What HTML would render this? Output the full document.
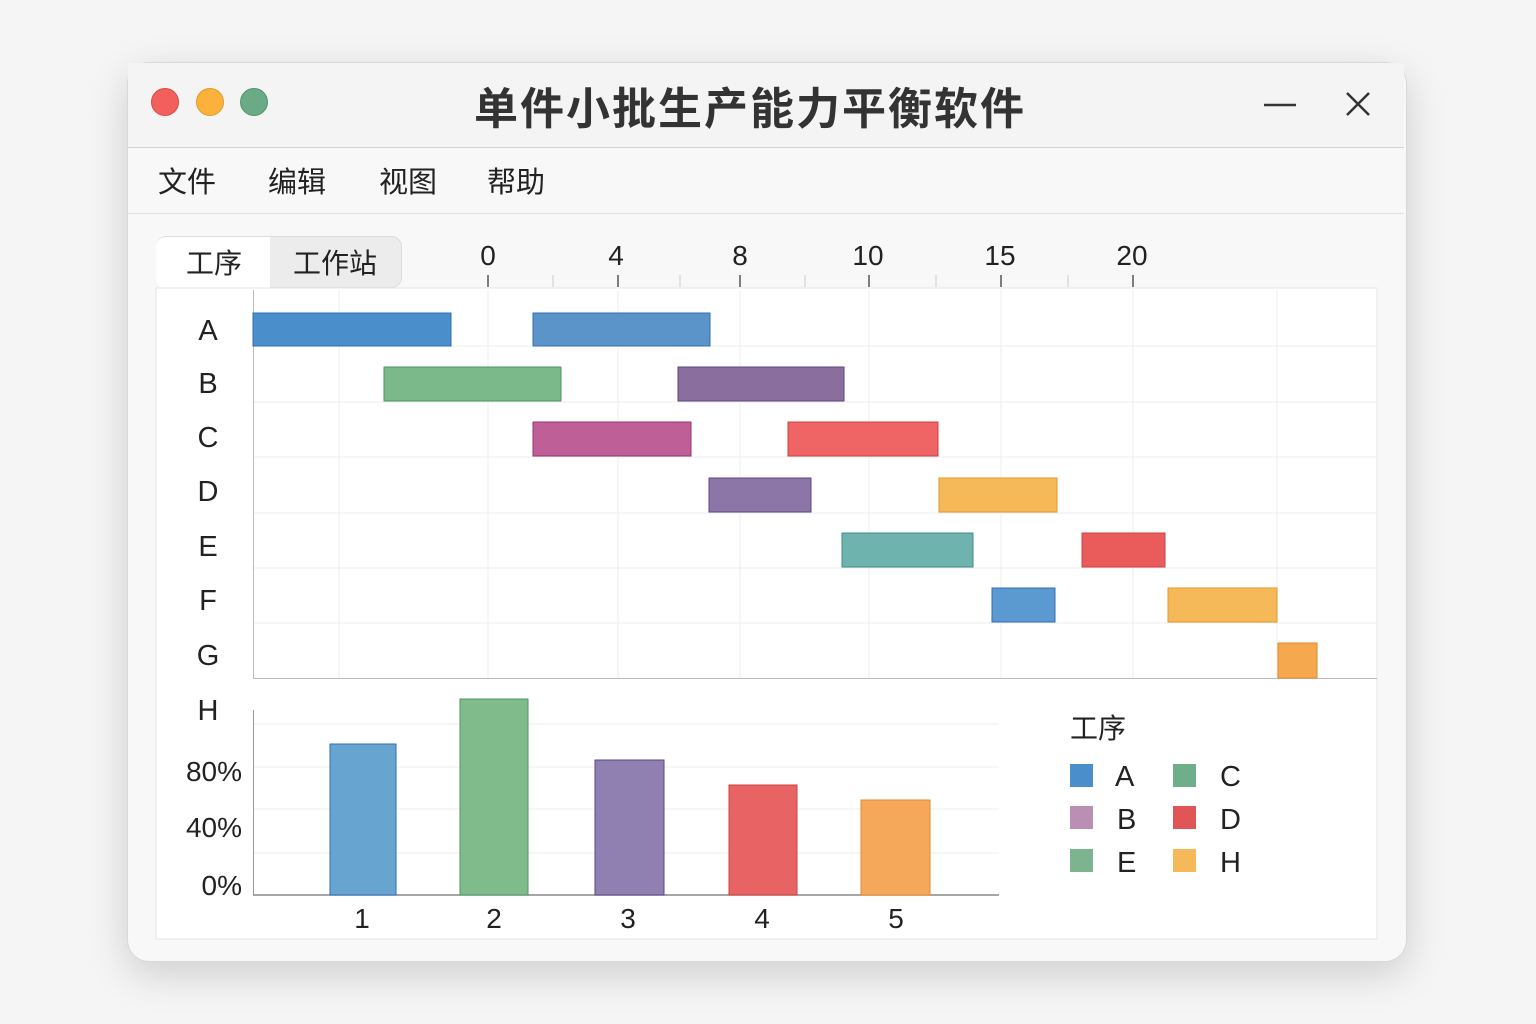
<!DOCTYPE html>
<html><head><meta charset="utf-8"><style>
body{margin:0;width:1536px;height:1024px;background:#f5f5f5;overflow:hidden;font-family:"Liberation Sans","Noto Sans CJK SC",sans-serif;}
.win{position:absolute;left:127px;top:62px;width:1278px;height:898px;border-radius:22px;background:#f8f8f8;box-shadow:0 12px 40px rgba(0,0,0,0.16);border:1px solid #d8d8d8;overflow:hidden;}
svg{position:absolute;left:0;top:0}
</style></head><body>
<div class="win"></div>
<svg width="1536" height="1024" font-family="Liberation Sans, Noto Sans CJK SC, sans-serif">
<rect x="128" y="63" width="1276" height="84" fill="#f4f4f4"/>
<line x1="128" y1="147.5" x2="1404" y2="147.5" stroke="#d6d6d6"/>
<line x1="128" y1="213.5" x2="1404" y2="213.5" stroke="#e2e2e2"/>
<circle cx="165" cy="102" r="13.5" fill="#f25f5c" stroke="#d94a47"/>
<circle cx="210" cy="102" r="13.5" fill="#fbb13c" stroke="#e09a2a"/>
<circle cx="254" cy="102" r="13.5" fill="#6aaa84" stroke="#4f9470"/>
<text x="750" y="124" font-size="44" font-weight="bold" fill="#333" text-anchor="middle" letter-spacing="2">单件小批生产能力平衡软件</text>
<line x1="1264" y1="105" x2="1296" y2="105" stroke="#333" stroke-width="2.5"/>
<path d="M1347 93 L1369 115 M1369 93 L1347 115" stroke="#333" stroke-width="2.5"/>
<g font-size="29" fill="#222"><text x="158" y="192">文件</text><text x="268" y="192">编辑</text><text x="379" y="192">视图</text><text x="487" y="192">帮助</text></g>
<rect x="156.5" y="236.5" width="245" height="51" rx="10" fill="#ececec" stroke="#dcdcdc"/>
<path d="M270 237 H166 a10 10 0 0 0 -10 10 V278 a10 10 0 0 0 10 10 H270Z" fill="#fff"/>
<text x="186" y="273" font-size="28" fill="#222">工序</text><text x="293" y="273" font-size="28" fill="#222">工作站</text>
<rect x="156" y="288" width="1221" height="651" fill="#fff" stroke="#e6e6e6"/>
<g font-size="28" fill="#222" text-anchor="middle"><text x="488" y="265">0</text><text x="616" y="265">4</text><text x="740" y="265">8</text><text x="868" y="265">10</text><text x="1000" y="265">15</text><text x="1132" y="265">20</text></g>
<g stroke="#555" stroke-width="1.5"><path d="M488 275V287M618 275V287M740 275V287M869 275V287M1001 275V287M1133 275V287"/></g>
<g stroke="#ccc"><path d="M553 275V287M680 275V287M805 275V287M936 275V287M1068 275V287"/></g>
<g stroke="#ececec"><path d="M339 290V678M488 290V678M618 290V678M740 290V678M869 290V678M1001 290V678M1133 290V678M1277 290V678"/>
<path d="M253 346H1377M253 402H1377M253 457H1377M253 513H1377M253 568H1377M253 623H1377"/></g>
<line x1="253.5" y1="290" x2="253.5" y2="678" stroke="#bbb"/>
<line x1="253" y1="678.5" x2="1377" y2="678.5" stroke="#bbb"/>
<g font-size="29" fill="#222" text-anchor="middle"><text x="208" y="340">A</text><text x="208" y="393">B</text><text x="208" y="447">C</text><text x="208" y="501">D</text><text x="208" y="556">E</text><text x="208" y="610">F</text><text x="208" y="665">G</text><text x="208" y="720">H</text></g>
<g stroke-width="1">
<rect x="253" y="313" width="198" height="33" fill="#4a8fcc" stroke="#2f6fb0"/>
<rect x="533" y="313" width="177" height="33" fill="#5b94c9" stroke="#2f6fb0"/>
<rect x="384" y="367" width="177" height="34" fill="#7bb88a" stroke="#4f9466"/>
<rect x="678" y="367" width="166" height="34" fill="#8a6f9e" stroke="#5e4580"/>
<rect x="533" y="422" width="158" height="34" fill="#bf5f98" stroke="#98306e"/>
<rect x="788" y="422" width="150" height="34" fill="#ef6464" stroke="#cc4040"/>
<rect x="709" y="478" width="102" height="34" fill="#8c76a8" stroke="#5e4580"/>
<rect x="939" y="478" width="118" height="34" fill="#f6b95a" stroke="#e09a2a"/>
<rect x="842" y="533" width="131" height="34" fill="#6fb3ae" stroke="#3e8e88"/>
<rect x="1082" y="533" width="83" height="34" fill="#ea5c5c" stroke="#cc4040"/>
<rect x="992" y="588" width="63" height="34" fill="#5b9ad0" stroke="#2f6fb0"/>
<rect x="1168" y="588" width="109" height="34" fill="#f6b95a" stroke="#e09a2a"/>
<rect x="1278" y="643" width="39" height="35" fill="#f6a84e" stroke="#e08a2a"/>
</g>
<g stroke="#ececec"><path d="M254 724H999M254 767H999M254 809H999M254 853H999"/></g>
<line x1="253.5" y1="710" x2="253.5" y2="895" stroke="#999"/>
<line x1="253" y1="895" x2="999" y2="895" stroke="#888" stroke-width="1.5"/>
<g font-size="28" fill="#222" text-anchor="end"><text x="242" y="781">80%</text><text x="242" y="837">40%</text><text x="242" y="895">0%</text></g>
<rect x="330" y="744" width="66" height="151" fill="#68a4d0" stroke="#2f6fb0"/>
<rect x="460" y="699" width="68" height="196" fill="#80bb8c" stroke="#4f9466"/>
<rect x="595" y="760" width="69" height="135" fill="#9080b2" stroke="#5e4580"/>
<rect x="729" y="785" width="68" height="110" fill="#e86464" stroke="#cc4040"/>
<rect x="861" y="800" width="69" height="95" fill="#f6a85a" stroke="#e08a2a"/>
<g font-size="28" fill="#222" text-anchor="middle"><text x="362" y="928">1</text><text x="494" y="928">2</text><text x="628" y="928">3</text><text x="762" y="928">4</text><text x="896" y="928">5</text></g>
<text x="1070" y="738" font-size="28" fill="#222">工序</text>
<rect x="1070" y="764" width="23" height="23" fill="#4a8fcc"/><text x="1115" y="786" font-size="29" fill="#222">A</text>
<rect x="1173" y="764" width="23" height="23" fill="#6fae8a"/><text x="1220" y="786" font-size="29" fill="#222">C</text>
<rect x="1070" y="806" width="23" height="23" fill="#bb8fb4"/><text x="1117" y="829" font-size="29" fill="#222">B</text>
<rect x="1173" y="806" width="23" height="23" fill="#e05555"/><text x="1220" y="829" font-size="29" fill="#222">D</text>
<rect x="1070" y="849" width="23" height="23" fill="#7bb48e"/><text x="1117" y="872" font-size="29" fill="#222">E</text>
<rect x="1173" y="849" width="23" height="23" fill="#f6b95a"/><text x="1220" y="872" font-size="29" fill="#222">H</text>
</svg>
</body></html>
